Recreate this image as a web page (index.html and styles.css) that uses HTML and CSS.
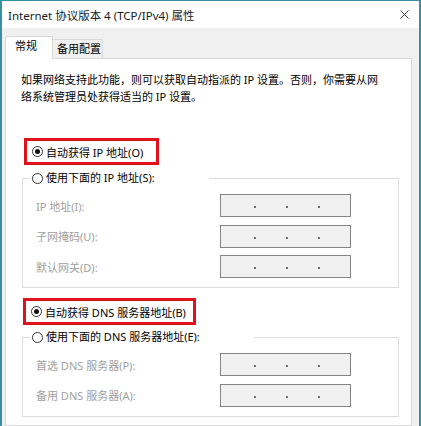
FILE: index.html
```html
<!DOCTYPE html>
<html lang="zh-CN">
<head>
<meta charset="utf-8">
<title>Internet 协议版本 4 (TCP/IPv4) 属性</title>
<link rel="stylesheet" href="styles.css">
</head>
<body>
<div class="window">
  <div class="titlebar">
    <span class="title">Internet 协议版本 4 (TCP/IPv4) 属性</span>
    <svg class="close" width="9" height="9" viewBox="0 0 9 9"><path d="M0.5 0.5 L8.5 8.5 M8.5 0.5 L0.5 8.5" stroke="#333" stroke-width="1" fill="none"/></svg>
  </div>
  <div class="content">
    <div class="tabs">
      <div class="tab active">常规</div>
      <div class="tab inactive">备用配置</div>
    </div>
    <div class="panel">
      <p class="desc">如果网络支持此功能，则可以获取自动指派的 IP 设置。否则，你需要从网<br>络系统管理员处获得适当的 IP 设置。</p>

      <div class="hl hl-ip">
        <span class="radio checked"></span><span>自动获得 IP 地址(O)</span>
      </div>
      <fieldset class="group">
        <legend><span class="radio"></span><span>使用下面的 IP 地址(S):</span></legend>
        <div class="rows">
          <span class="lbl">IP 地址(I):</span><div class="ip"><i></i><i></i><i></i></div>
          <span class="lbl">子网掩码(U):</span><div class="ip"><i></i><i></i><i></i></div>
          <span class="lbl">默认网关(D):</span><div class="ip"><i></i><i></i><i></i></div>
        </div>
      </fieldset>

      <div class="hl hl-dns">
        <span class="radio checked"></span><span>自动获得 DNS 服务器地址(B)</span>
      </div>
      <fieldset class="group group-dns">
        <legend><span class="radio"></span><span>使用下面的 DNS 服务器地址(E):</span></legend>
        <div class="rows">
          <span class="lbl">首选 DNS 服务器(P):</span><div class="ip"><i></i><i></i><i></i></div>
          <span class="lbl">备用 DNS 服务器(A):</span><div class="ip"><i></i><i></i><i></i></div>
        </div>
      </fieldset>
    </div>
  </div>
</div>
</body>
</html>
```
FILE: styles.css
```css
* { box-sizing: border-box; }
html, body { margin: 0; padding: 0; }
body {
  font-family: "Noto Sans", "Noto Sans CJK SC", sans-serif;
  font-size: 11px;
  color: #000;
  background: #f0f0f0;
}
.window {
  width: 421px;
  height: 426px;
  border-style: solid;
  border-color: #3a8ea2;
  border-width: 1px 2px 0 2px;
  background: #f0f0f0;
  display: flex;
  flex-direction: column;
  overflow: hidden;
}
.titlebar {
  height: 27px;
  flex: none;
  background: #fff;
  display: flex;
  align-items: center;
  justify-content: space-between;
  padding: 0 10px 0 6px;
}
.title { font-size: 11.5px; color: #1a1a1a; }
.content {
  flex: 1;
  display: flex;
  flex-direction: column;
  padding: 8px 7px 0 3px;
}
.tabs {
  display: flex;
  align-items: flex-end;
  height: 22px;
  flex: none;
}
.tab {
  border: 1px solid #d9d9d9;
  border-bottom: none;
  white-space: nowrap;
}
.tab.active {
  width: 48px;
  height: 23px;
  background: #fff;
  margin-bottom: -1px;
  position: relative;
  z-index: 1;
  padding-left: 9px;
  line-height: 18px;
}
.tab.inactive {
  width: 50px;
  height: 19px;
  border-left: none;
  background: #f0f0f0;
  padding-left: 4px;
  line-height: 18px;
}
.panel {
  flex: 1;
  background: #fff;
  border: 1px solid #d9d9d9;
  padding: 12px 0 0 15px;
}
.desc {
  margin: 0;
  line-height: 17px;
  white-space: nowrap;
}
.hl {
  display: flex;
  align-items: center;
  height: 27px;
  border: 3px solid #e0121c;
  padding-left: 5px;
  gap: 3px;
  white-space: nowrap;
}
.hl-ip { width: 135px; margin: 33px 0 0 3px; }
.hl-dns { width: 173px; margin: 10px 0 0 2px; }
.radio {
  display: inline-block;
  flex: none;
  width: 11px;
  height: 11px;
  border: 1px solid #333;
  border-radius: 50%;
  background: #fff;
  position: relative;
}
.radio.checked::after {
  content: "";
  position: absolute;
  left: 2px;
  top: 2px;
  width: 5px;
  height: 5px;
  border-radius: 50%;
  background: #111;
}
.group {
  width: 377px;
  margin: 5px 0 0 1px;
  padding: 8px 0 9px 0;
  border: 1px solid #dcdcdc;
}
.group-dns { margin-top: 4px; }
.group legend {
  display: flex;
  align-items: center;
  gap: 3px;
  margin-left: 7px;
  padding: 0 54px 0 2px;
  line-height: 16px;
  white-space: nowrap;
}
.rows {
  display: grid;
  grid-template-columns: 184px 131px;
  grid-auto-rows: 23px;
  row-gap: 7.5px;
  align-items: center;
  padding-left: 13px;
}
.lbl { color: #a0a0a0; white-space: nowrap; }
.ip {
  height: 23px;
  background: #f0f0f0;
  border: 1px solid #858585;
  display: flex;
  align-items: center;
  gap: 30px;
  padding-left: 33px;
}
.ip i {
  display: block;
  width: 2px;
  height: 2px;
  margin-top: 3px;
  background: #707070;
}
```
